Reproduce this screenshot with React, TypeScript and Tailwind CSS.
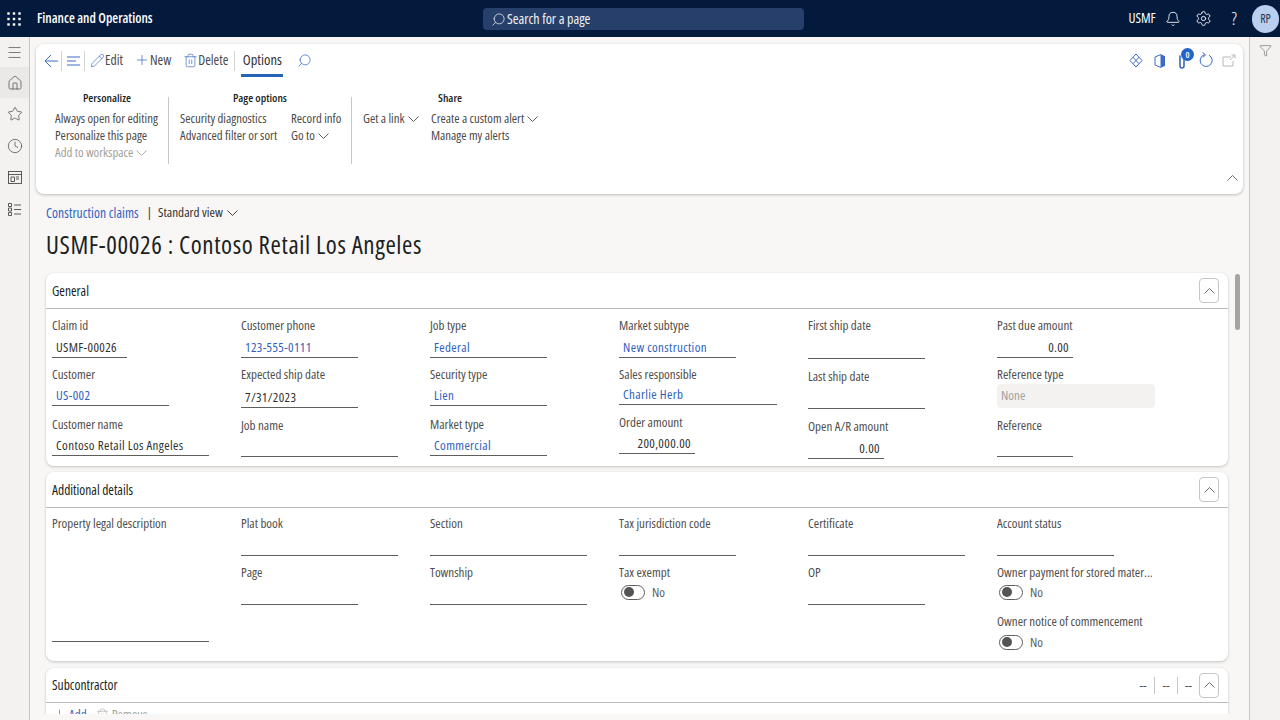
import { Bell, Clock, Filter, Home, Menu, Pencil, Plus, Search, Settings, Star, Trash2 } from "lucide-react"

type FieldProps = {
    label: string
    value?: string
    link?: boolean
    right?: boolean
    width: string
    mt?: string
    ih?: string
}

function Chevron({ up, className = "" }: { up?: boolean; className?: string }) {
    return (
        <svg width="11" height="6" viewBox="0 0 11 6" fill="none" stroke="currentColor" strokeWidth="0.9" className={`shrink-0 ${className}`}>
            <path d={up ? "M0.5 5.5L5.5 0.5L10.5 5.5" : "M0.5 0.5L5.5 5.5L10.5 0.5"} />
        </svg>
    )
}

function Field({ label, value, link, right, width, mt = "", ih = "h-[23px]" }: FieldProps) {
    return (
        <div className={mt}>
            <div className="h-5 leading-5 text-[#4f4e4d] whitespace-nowrap">{label}</div>
            <div className={`${ih} ${width} flex items-end border-b border-[#605e5c] px-1 leading-5 ${right ? "justify-end" : ""} ${link ? "text-[#2f5fc0]" : "text-[#323130]"}`}>
                <span className="tracking-[0.35px] whitespace-nowrap">{value}</span>
            </div>
        </div>
    )
}

function Toggle({ label, mt = "", tmt = "" }: { label: string; mt?: string; tmt?: string }) {
    return (
        <div className={mt}>
            <div className="h-5 leading-5 text-[#4f4e4d] whitespace-nowrap">{label}</div>
            <div className={`h-5 flex items-center gap-[7px] pl-[2px] ${tmt}`}>
                <div className="w-6 h-[15px] rounded-full border border-[#605e5c] flex items-center pl-[2px]">
                    <div className="w-[10px] h-[10px] rounded-full bg-[#555453]" />
                </div>
                <span className="text-[#605e5c] translate-y-px">No</span>
            </div>
        </div>
    )
}

function CollapseBtn() {
    return (
        <button className="w-5 h-[25px] rounded border border-[#c8c6c4] flex items-center justify-center text-[#605e5c]">
            <Chevron up />
        </button>
    )
}

function Section({ title, children, right, headerH = "h-[36px]" }: { title: string; children?: React.ReactNode; right?: React.ReactNode; headerH?: string }) {
    return (
        <section className="bg-white rounded-lg shadow-[0_1px_3px_rgba(0,0,0,0.22)]">
            <div className={`${headerH} flex items-center justify-between pl-[6px] pr-[9px] border-b border-[#bdbbb9]`}>
                <h3 className="text-[13.5px] text-[#201f1e] font-medium pt-[1px]">{title}</h3>
                <div className="flex items-center">
                    {right}
                    <CollapseBtn />
                </div>
            </div>
            {children}
        </section>
    )
}

function Waffle() {
    return (
        <svg width="14" height="14" viewBox="0 0 14 14" fill="white">
            {[1.5, 7, 12.5].map((y) => [1.5, 7, 12.5].map((x) => <rect key={`${x}-${y}`} x={x - 1.2} y={y - 1.2} width="2.4" height="2.4" />))}
        </svg>
    )
}

function TopBar() {
    return (
        <header className="h-[37px] shrink-0 bg-[#031a3d] flex items-center text-white relative">
            <div className="w-[37px] pl-[7px]"><Waffle /></div>
            <span className="font-semibold text-[13.4px]">Finance and Operations</span>
            <div className="absolute left-[483px] top-2 w-[321px] h-[22px] rounded bg-[#263f6b] flex items-center pl-2 gap-[1px] text-[#f3f2f1]">
                <Search size={15} strokeWidth={1.2} className="-scale-x-100" />
                <span className="text-[14px] -translate-y-px">Search for a page</span>
            </div>
            <div className="ml-auto flex items-center">
                <span className="text-[13.5px] mr-[9px]">USMF</span>
                <Bell size={16} strokeWidth={1.3} className="mr-[14px]" />
                <Settings size={17} strokeWidth={1.3} className="mr-[20px]" />
                <span className="text-[19px] font-light mr-[15px] leading-none">?</span>
                <div className="w-[27px] h-[28px] rounded-full bg-[#b9cff0] text-[#24344f] text-[12px] flex items-center justify-center mr-[1px]">RP</div>
            </div>
        </header>
    )
}

function SideRail() {
    const cls = "h-[32px] flex items-center justify-center text-[#4b4a49]"
    return (
        <nav className="w-[30px] shrink-0 bg-[#f3f2f1] border-r border-[#c8c6c4] pt-[1px]">
            <div className="h-[29px] flex items-center justify-center text-[#4b4a49]"><Menu size={17} strokeWidth={1} /></div>
            <div className="h-[31px] flex items-center justify-center text-[#4b4a49] bg-[#ebe9e7]"><Home size={16} strokeWidth={1.1} /></div>
            <div className={cls}><Star size={16} strokeWidth={1.1} /></div>
            <div className={cls}><Clock size={16} strokeWidth={1.1} /></div>
            <div className="h-[31px] flex items-center justify-center text-[#4b4a49]">
                <svg width="14" height="13" viewBox="0 0 14 13" fill="none" stroke="currentColor" strokeWidth="0.9">
                    <rect x="0.5" y="0.5" width="13" height="12" />
                    <path d="M0.5 3.5h13M3 6h3.5v4.5H3zM8 6h3M8 8h3" />
                </svg>
            </div>
            <div className={cls}>
                <svg width="13" height="13" viewBox="0 0 13 13" fill="none" stroke="currentColor" strokeWidth="0.9">
                    <path d="M0.5 0.5h3v3h-3zM0.5 5h3v3h-3zM0.5 9.5h3v3h-3zM6 2h7M6 6.5h7M6 11h7" />
                </svg>
            </div>
        </nav>
    )
}

function ActionIcons() {
    return (
        <div className="flex items-center text-[#3b6cc4]">
            <svg width="14" height="15" viewBox="0 0 14 15" fill="none" stroke="currentColor" strokeWidth="1" className="mr-[11px]">
                <path d="M7 1l6 6.5-6 6.5-6-6.5zM4 4.2l6 6.5M10 4.2l-6 6.5" />
            </svg>
            <svg width="12" height="14" viewBox="0 0 12 14" className="mr-[12px]">
                <path d="M1 3l6-2.5v13L1 11z" fill="none" stroke="currentColor" strokeWidth="1" />
                <path d="M7 .5l4 1.5v10l-4 1.5z" fill="currentColor" />
            </svg>
            <div className="relative mr-[11px]">
                <svg width="10" height="16" viewBox="0 0 10 16" fill="none" stroke="currentColor" strokeWidth="1.6">
                    <path d="M2 2.5v10.5a2 2 0 0 0 4 0V3a1.4 1.4 0 0 1 3 0" />
                </svg>
                <span className="absolute -top-[5px] left-[3px] w-[13px] h-[13px] rounded-full bg-[#2463c7] text-white text-[9px] font-semibold leading-[13px] text-center">0</span>
            </div>
            <svg width="15" height="17" viewBox="0 0 15 17" fill="none" stroke="currentColor" strokeWidth="1" className="mr-[8px]">
                <path d="M10 3.2a6 6 0 1 1-4.5-.5" />
                <path d="M3.5 0.5L6.5 2.8L4 5.5" />
            </svg>
            <svg width="14" height="13" viewBox="0 0 14 13" fill="none" stroke="#b9b7b5" strokeWidth="1">
                <path d="M9 3H1v9h10V7M8 6l5-5M9.5 1H13v3.5" />
            </svg>
        </div>
    )
}

function ActionPane() {
    return (
        <div className="relative mt-[7px] mx-[6px] h-[150px] shrink-0 bg-white rounded-lg shadow-[0_1px_3px_rgba(0,0,0,0.25)] text-[#4b4a49]">
            <div className="h-[33px] flex items-center pl-2 pr-[7px] text-[13.6px]">
                <div className="w-[18px] h-5 border-r border-[#d6d4d2] flex items-center text-[#3b6cc4]">
                    <svg width="15" height="14" viewBox="0 0 15 14" fill="none" stroke="currentColor" strokeWidth="1"><path d="M14 7H1M7 1L1 7l6 6" /></svg>
                </div>
                <div className="w-[23px] h-5 border-r border-[#d6d4d2] flex items-center justify-center text-[#3b6cc4]">
                    <svg width="13" height="10" viewBox="0 0 13 10" stroke="currentColor" strokeWidth="1"><path d="M0 1h13M0 5h9M0 9h13" /></svg>
                </div>
                <div className="flex items-center ml-[5px]">
                    <Pencil size={15} strokeWidth={1.1} className="text-[#3b6cc4]" />
                    <span>Edit</span>
                </div>
                <div className="flex items-center ml-[11px] gap-0">
                    <Plus size={16} strokeWidth={1.1} className="text-[#3b6cc4]" />
                    <span>New</span>
                </div>
                <div className="flex items-center ml-[12px] gap-0 pr-[6px] h-5 border-r border-[#d6d4d2]">
                    <Trash2 size={15} strokeWidth={1.1} className="text-[#3b6cc4]" />
                    <span>Delete</span>
                </div>
                <div className="ml-[6px] w-[42px] h-[33px] flex items-center justify-center border-b-[3px] border-[#2563b8] pt-[1px] text-[#323130] font-medium text-[14.5px]">Options</div>
                <Search size={15} strokeWidth={1.2} className="ml-[14px] -scale-x-100 text-[#3b6cc4]" />
                <div className="ml-auto"><ActionIcons /></div>
            </div>
            <div className="flex items-start mt-[13px] pl-[19px] text-[12.8px]">
                <div className="w-[113px] shrink-0">
                    <div className="h-4 leading-4 ml-[28px] font-semibold text-[11.5px] text-[#201f1e]">Personalize</div>
                    <div className="mt-1 leading-[17px]">
                        <div>Always open for editing</div>
                        <div>Personalize this page</div>
                        <div className="flex items-center gap-[3px] text-[#a19f9d]">Add to workspace <Chevron /></div>
                    </div>
                </div>
                <div className="w-[1px] h-[67px] mt-[7px] bg-[#c8c6c4] shrink-0" />
                <div className="w-[182px] shrink-0 pl-[11px]">
                    <div className="h-4 leading-4 ml-[53px] font-semibold text-[11.5px] text-[#201f1e]">Page options</div>
                    <div className="mt-1 leading-[17px] flex">
                        <div className="w-[111px]">
                            <div>Security diagnostics</div>
                            <div>Advanced filter or sort</div>
                        </div>
                        <div>
                            <div>Record info</div>
                            <div className="flex items-center gap-[3px]">Go to <Chevron /></div>
                        </div>
                    </div>
                </div>
                <div className="w-[1px] h-[67px] mt-[7px] bg-[#c8c6c4] shrink-0" />
                <div className="pl-[11px]">
                    <div className="h-4 leading-4 ml-[75px] font-semibold text-[11.5px] text-[#201f1e]">Share</div>
                    <div className="mt-1 leading-[17px] flex">
                        <div className="w-[68px] flex items-center h-[17px] gap-[3px]">Get a link <Chevron /></div>
                        <div>
                            <div className="flex items-center gap-[3px]">Create a custom alert <Chevron /></div>
                            <div>Manage my alerts</div>
                        </div>
                    </div>
                </div>
            </div>
            <Chevron up className="absolute right-[5px] bottom-[13px] text-[#605e5c]" />
        </div>
    )
}

export default function App() {
    return (
        <div className="h-screen w-full overflow-hidden flex flex-col bg-[#f3f2f1] text-[13px] [font-family:'Open_Sans','Noto_Sans',sans-serif] [font-stretch:75%]">
            <TopBar />
            <div className="flex flex-1 min-h-0">
                <SideRail />
                <main className="flex-1 min-w-0 bg-[#f8f7f6] flex flex-col relative">
                    <ActionPane />
                    <div className="flex-1 min-h-0 overflow-hidden pl-4 pr-[21px]">
                        <div className="mt-[10px] h-[18px] flex items-center">
                            <span className="text-[#2f5fc0] text-[13.5px] tracking-[0.1px]">Construction claims</span>
                            <span className="ml-2 mr-[6px] text-[#323130]">|</span>
                            <span className="text-[#323130] text-[13.2px]">Standard view</span>
                            <Chevron className="ml-1 text-[#323130]" />
                        </div>
                        <h1 className="mt-[5px] h-[34px] leading-[34px] text-[25px] tracking-[0.6px] text-[#201f1e] font-medium whitespace-nowrap">USMF-00026 : Contoso Retail Los Angeles</h1>
                        <div className="mt-[12px] flex flex-col gap-[6px]">
                            <Section title="General">
                                <div className="grid grid-cols-[repeat(6,189px)] pl-[6px] pt-[6px] pb-[7px]">
                                    <div>
                                        <Field label="Claim id" value="USMF-00026" width="w-[75px]" />
                                        <Field label="Customer" value="US-002" link width="w-[117px]" mt="mt-[6px]" ih="h-[22px]" />
                                        <Field label="Customer name" value="Contoso Retail Los Angeles" width="w-[157px]" mt="mt-[8px]" ih="h-[22px]" />
                                    </div>
                                    <div>
                                        <Field label="Customer phone" value="123-555-0111" link width="w-[117px]" />
                                        <Field label="Expected ship date" value="7/31/2023" width="w-[117px]" mt="mt-[6px]" ih="h-[24px]" />
                                        <Field label="Job name" width="w-[157px]" mt="mt-[7px]" ih="h-[22px]" />
                                    </div>
                                    <div>
                                        <Field label="Job type" value="Federal" link width="w-[117px]" />
                                        <Field label="Security type" value="Lien" link width="w-[117px]" mt="mt-[6px]" ih="h-[22px]" />
                                        <Field label="Market type" value="Commercial" link width="w-[117px]" mt="mt-[8px]" ih="h-[22px]" />
                                    </div>
                                    <div>
                                        <Field label="Market subtype" value="New construction" link width="w-[117px]" />
                                        <Field label="Sales responsible" value="Charlie Herb" link width="w-[158px]" mt="mt-[6px]" ih="h-[21px]" />
                                        <Field label="Order amount" value="200,000.00" right width="w-[76px]" mt="mt-[7px]" ih="h-[22px]" />
                                    </div>
                                    <div>
                                        <Field label="First ship date" width="w-[117px]" ih="h-[24px]" />
                                        <Field label="Last ship date" width="w-[117px]" mt="mt-[7px]" ih="h-[23px]" />
                                        <Field label="Open A/R amount" value="0.00" right width="w-[76px]" mt="mt-[7px]" ih="h-[23px]" />
                                    </div>
                                    <div>
                                        <Field label="Past due amount" value="0.00" right width="w-[76px]" />
                                        <div className="mt-[6px]">
                                            <div className="h-5 leading-5 text-[#4f4e4d]">Reference type</div>
                                            <div className="h-6 w-[158px] rounded-sm bg-[#f3f2f1] text-[#a19f9d] flex items-center px-1">None</div>
                                        </div>
                                        <Field label="Reference" width="w-[76px]" mt="mt-[7px]" ih="h-[22px]" />
                                    </div>
                                </div>
                            </Section>
                            <Section title="Additional details">
                                <div className="grid grid-cols-[repeat(6,189px)] pl-[6px] pt-[5px] pb-[9px]">
                                    <div>
                                        <Field label="Property legal description" width="w-[157px]" ih="h-[109px]" />
                                    </div>
                                    <div>
                                        <Field label="Plat book" width="w-[157px]" />
                                        <Field label="Page" width="w-[117px]" mt="mt-[6px]" />
                                    </div>
                                    <div>
                                        <Field label="Section" width="w-[157px]" />
                                        <Field label="Township" width="w-[157px]" mt="mt-[6px]" />
                                    </div>
                                    <div>
                                        <Field label="Tax jurisdiction code" width="w-[117px]" />
                                        <Toggle label="Tax exempt" mt="mt-[6px]" />
                                    </div>
                                    <div>
                                        <Field label="Certificate" width="w-[157px]" />
                                        <Field label="OP" width="w-[117px]" mt="mt-[6px]" />
                                    </div>
                                    <div>
                                        <Field label="Account status" width="w-[117px]" />
                                        <Toggle label="Owner payment for stored mater..." mt="mt-[6px]" />
                                        <Toggle label="Owner notice of commencement" mt="mt-[9px]" tmt="mt-[1px]" />
                                    </div>
                                </div>
                            </Section>
                            <div className="mt-[1px]">
                                <Section
                                    title="Subcontractor"
                                    headerH="h-[35px]"
                                    right={
                                        <div className="flex items-center text-[#4f4e4d]">
                                            <span className="w-[23px] h-[17px] leading-[17px] text-center border-r border-[#c8c6c4]">--</span>
                                            <span className="w-[23px] h-[17px] leading-[17px] text-center border-r border-[#c8c6c4]">--</span>
                                            <span className="w-[21px] h-[17px] leading-[17px] text-center">--</span>
                                        </div>
                                    }
                                >
                                    <div className="flex items-center gap-[9px] pl-[6px] pt-[2px] text-[#a19f9d]">
                                        <span className="flex items-center gap-[2px] text-[#2f5fc0]"><Plus size={15} strokeWidth={1} />Add</span>
                                        <span className="flex items-center gap-[3px]"><Trash2 size={13} strokeWidth={1} />Remove</span>
                                    </div>
                                </Section>
                            </div>
                        </div>
                    </div>
                    <div className="h-[6px] shrink-0 bg-[#f8f7f6]" />
                    <div className="absolute left-[1205px] top-[237px] w-[5px] h-[56px] rounded-full bg-[#a6a4a2]" />
                </main>
                <aside className="w-[31px] shrink-0 bg-[#f3f2f1] border-l border-[#c8c6c4] flex justify-center pt-[7px] text-[#4b4a49]">
                    <Filter size={13} strokeWidth={1} />
                </aside>
            </div>
        </div>
    )
}
